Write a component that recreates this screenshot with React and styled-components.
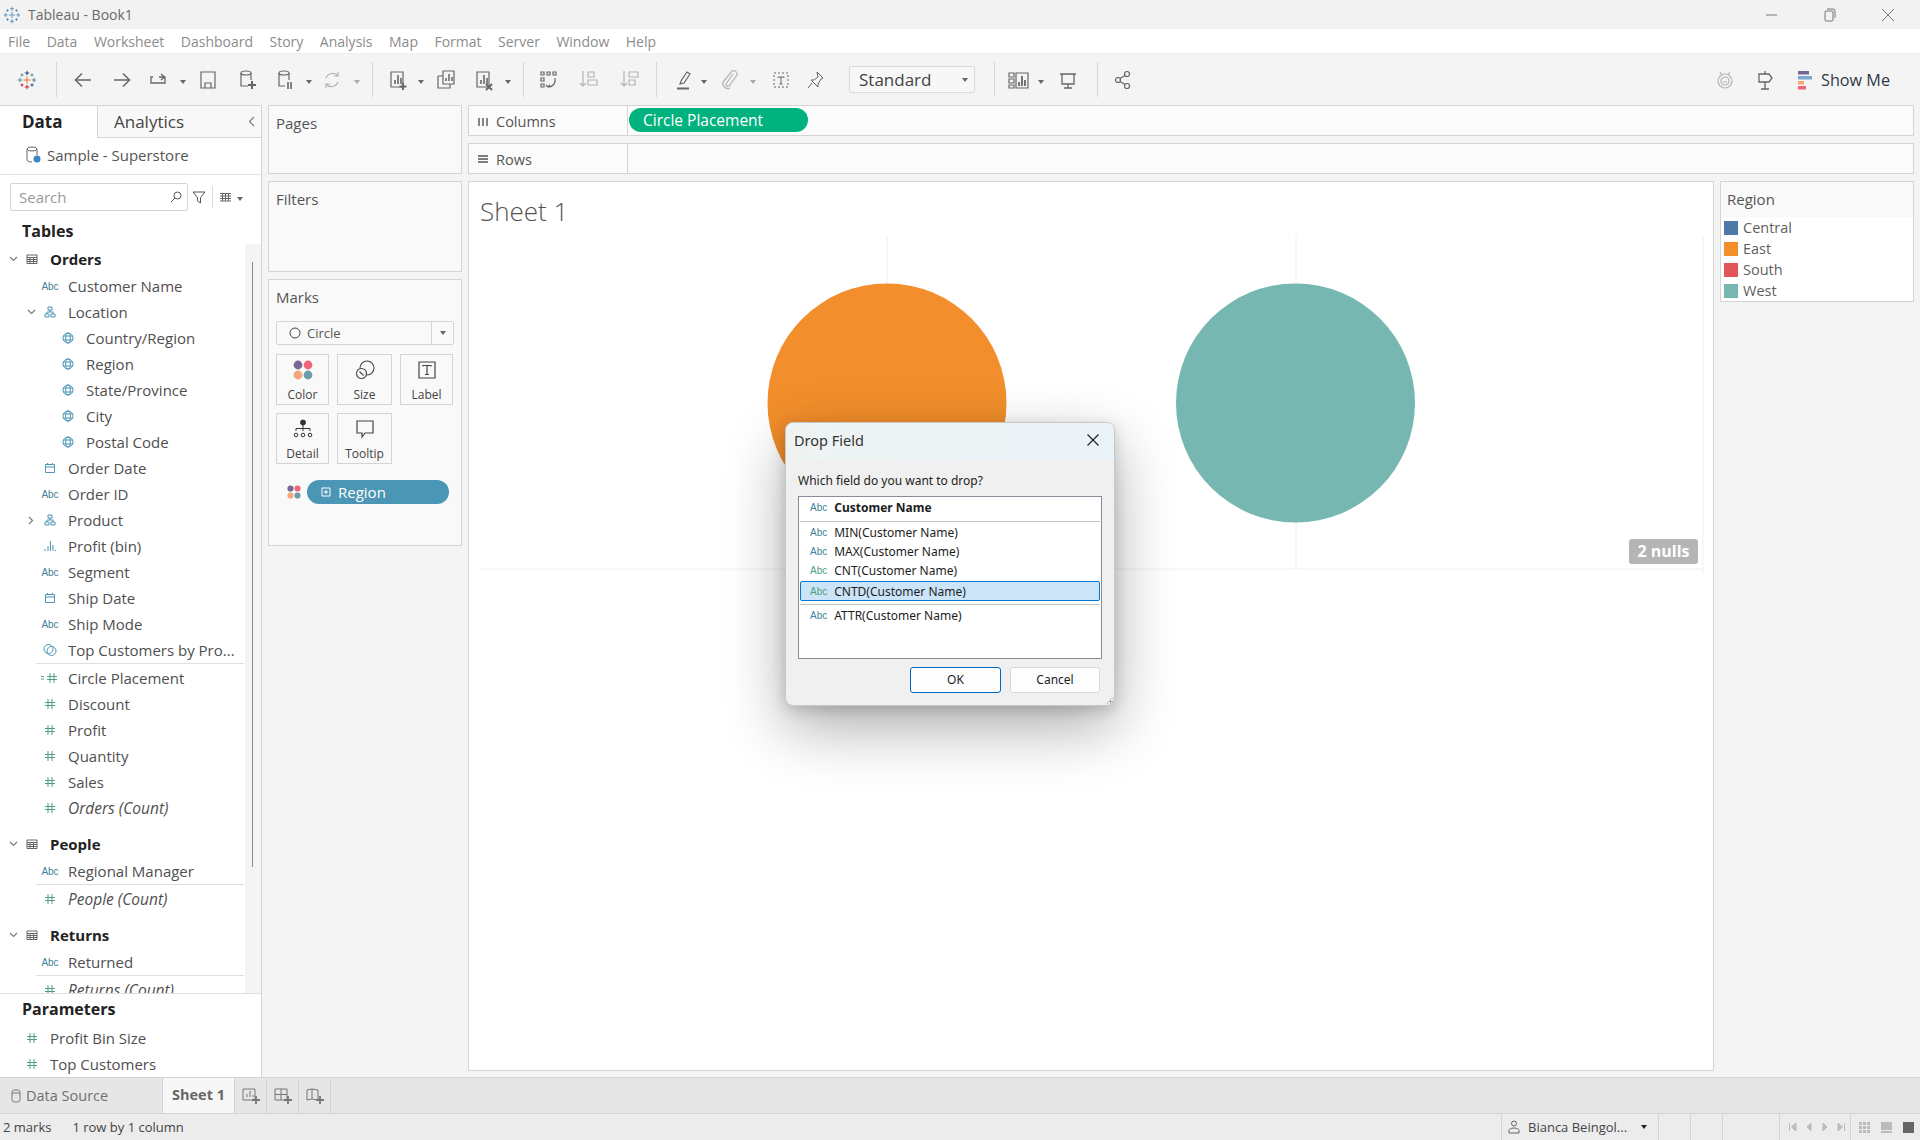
import React from 'react';
import styled, { createGlobalStyle } from 'styled-components';

const FONT = '"Open Sans", "Noto Sans", sans-serif';
const LINE = '#d4d4d4';

const Global = createGlobalStyle`
  html, body { margin: 0; padding: 0; background: #f4f4f4; }
  * { box-sizing: border-box; }
  body { font-family: ${FONT}; overflow: hidden; }
`;

const Page = styled.div`
  position: relative;
  width: 1920px;
  height: 1140px;
  display: flex;
  flex-direction: column;
  overflow: hidden;
  color: #4f4f4f;
`;

/* window chrome */
const TitleBar = styled.div`
  height: 29px;
  background: #f2f2f2;
  display: flex;
  align-items: center;
  padding-left: 3px;
  font-size: 14px;
  color: #6a6a6a;
`;
const TitleText = styled.span`margin-left: 7px;`;
const WinControls = styled.div`
  margin-left: auto;
  display: flex;
  align-items: center;
  gap: 44px;
  padding-right: 25px;
`;
const MenuBar = styled.div`
  height: 25px;
  background: #fff;
  display: flex;
  align-items: center;
  padding-left: 8px;
  gap: 16.5px;
  font-size: 14px;
  color: #8c8c8c;
  border-bottom: 1px solid #efefef;
`;
const Toolbar = styled.div`
  height: 51px;
  background: #f4f4f4;
  display: flex;
  align-items: center;
  padding-left: 15px;
  padding-right: 30px;
`;
const Tool = styled.div`
  width: 24px;
  height: 24px;
  margin-left: ${(p) => p.$gap || 0}px;
  flex: none;
  display: flex;
  align-items: center;
  justify-content: center;
  opacity: ${(p) => (p.$dim ? 0.45 : 1)};
  svg { display: block; }
`;
const Caret = styled.div`
  width: 8px;
  margin-left: ${(p) => p.$gap || 0}px;
  flex: none;
  height: 0;
  display: flex;
  justify-content: center;
  &::after {
    content: '';
    border: 3px solid transparent;
    border-top: 4px solid ${(p) => (p.$dim ? '#aaa' : '#666')};
    border-bottom: 0;
  }
`;
const ToolSep = styled.div`
  width: 1px;
  height: 35px;
  flex: none;
  background: #d6d6d6;
  margin-left: ${(p) => p.$gap || 0}px;
`;
const StandardSelect = styled.div`
  width: 126px;
  height: 27px;
  margin-left: ${(p) => p.$gap || 0}px;
  flex: none;
  display: flex;
  align-items: center;
  justify-content: space-between;
  padding: 0 6px 0 9px;
  border: 1px solid #dcdcdc;
  border-radius: 2px;
  background: #f7f7f7;
  font-size: 17px;
  color: #444;
`;
const ShowMe = styled.div`
  margin-left: auto;
  display: flex;
  align-items: center;
`;
const ShowMeText = styled.span`
  font-size: 16.2px;
  color: #2f3a48;
  margin-left: 4px;
`;

/* body */
const Body = styled.div`
  flex: 1;
  display: flex;
  min-height: 0;
  background: #f4f4f4;
`;
const Sidebar = styled.aside`
  width: 262px;
  flex: none;
  background: #fff;
  border-right: 1px solid ${LINE};
  border-top: 1px solid ${LINE};
  display: flex;
  flex-direction: column;
`;
const PaneTabs = styled.div`
  height: 32px;
  display: flex;
  flex: none;
  font-size: 17px;
`;
const DataTab = styled.div`
  width: 97px;
  padding-left: 22px;
  line-height: 31px;
  font-weight: 700;
  color: #222;
`;
const AnalyticsTab = styled.div`
  flex: 1;
  display: flex;
  align-items: center;
  justify-content: space-between;
  padding: 0 6px 0 16px;
  background: #f8f8f8;
  border-left: 1px solid ${LINE};
  border-bottom: 1px solid ${LINE};
  color: #444;
`;
const SourceRow = styled.div`
  height: 37px;
  flex: none;
  display: flex;
  align-items: center;
  gap: 6px;
  padding: 0 0 2px 26px;
  font-size: 15px;
  color: #555;
  border-bottom: 1px solid #e4e4e4;
`;
const SearchRow = styled.div`
  height: 42px;
  flex: none;
  display: flex;
  align-items: center;
  padding: 2px 0 0 10px;
`;
const SearchBox = styled.div`
  width: 178px;
  height: 28px;
  display: flex;
  align-items: center;
  justify-content: space-between;
  padding: 0 5px 0 8px;
  border: 1px solid ${LINE};
  border-radius: 2px;
  font-size: 15px;
  color: #9a9a9a;
`;
const SearchTools = styled.div`
  display: flex;
  align-items: center;
  margin-left: 4px;
`;
const VRule = styled.div`
  width: 1px;
  height: 22px;
  background: #ddd;
  margin: 0 6px;
`;
const SectionTitle = styled.div`
  height: 27px;
  flex: none;
  padding-left: 22px;
  display: flex;
  align-items: center;
  font-size: 16px;
  font-weight: 700;
  color: #222;
`;
const FieldList = styled.div`
  position: relative;
  flex: 1;
  min-height: 0;
  overflow: hidden;
`;
const ScrollTrack = styled.div`
  position: absolute;
  top: 0;
  right: 0;
  bottom: 0;
  width: 16px;
  background: #f4f4f4;
  &::after {
    content: '';
    position: absolute;
    left: 7px;
    top: 18px;
    height: 605px;
    width: 1px;
    background: #8a8a8a;
  }
`;
const Row = styled.div`
  height: 26px;
  display: flex;
  align-items: center;
  padding-left: ${(p) => p.$pad}px;
  font-size: 15px;
  color: #4f4f4f;
  white-space: nowrap;
  margin-top: ${(p) => p.$top || 0}px;
`;
const Chevron = styled.span`
  width: 14px;
  flex: none;
  display: flex;
  justify-content: center;
`;
const IconSlot = styled.span`
  width: 24px;
  height: 18px;
  flex: none;
  display: flex;
  align-items: center;
  justify-content: center;
  margin-right: 6px;
`;
const AbcMark = styled.span`
  font-size: 10px;
  font-weight: 400;
  letter-spacing: 0;
  color: ${(p) => p.$color || '#3f7f98'};
  font-family: "Liberation Sans", sans-serif;
`;
const TableName = styled.span`
  font-weight: 700;
  color: #222;
`;
const Measure = styled.span`
  font-style: ${(p) => (p.$italic ? 'italic' : 'normal')};
  font-size: ${(p) => (p.$italic ? '15.5px' : 'inherit')};
`;
const Rule = styled.div`
  height: 1px;
  margin-left: 36px;
  margin-right: 17px;
  background: #dfdfdf;
`;
const Params = styled.div`
  height: 84px;
  flex: none;
  border-top: 1px solid #dfdfdf;
  padding-top: 1px;
`;

const MidColumn = styled.div`
  width: 194px;
  flex: none;
  margin-left: 6px;
  display: flex;
  flex-direction: column;
  gap: 7px;
`;
const Card = styled.section`
  height: ${(p) => p.$h}px;
  flex: none;
  padding: 7px 7px 0;
  background: #f9f9f9;
  border: 1px solid ${LINE};
  font-size: 15px;
  color: #555;
`;
const MarkSelect = styled.div`
  height: 24px;
  margin-top: 14px;
  display: flex;
  align-items: center;
  border: 1px solid ${LINE};
  border-radius: 2px;
  font-size: 13px;
  padding-left: 12px;
  gap: 6px;
`;
const MarkCaretBox = styled.span`
  margin-left: auto;
  width: 22px;
  height: 100%;
  border-left: 1px solid ${LINE};
  display: flex;
  align-items: center;
  justify-content: center;
`;
const CaretGlyph = styled.span`
  display: block;
  flex: none;
  margin-left: ${(p) => p.$gap || 0}px;
  border: 3.5px solid transparent;
  border-top: 4px solid ${(p) => p.$color || '#666'};
  border-bottom: 0;
`;
const MarkGrid = styled.div`
  display: grid;
  grid-template-columns: 53px 55px 53px;
  grid-auto-rows: 51px;
  column-gap: 8px;
  row-gap: 8px;
  margin-top: 9px;
`;
const MarkButton = styled.div`
  border: 1px solid ${LINE};
  display: flex;
  flex-direction: column;
  align-items: center;
  padding-top: 5px;
  font-size: 12px;
  color: #444;
  gap: 6px;
`;
const PillRow = styled.div`
  display: flex;
  align-items: center;
  margin-top: 16px;
  padding-left: 11px;
  gap: 6px;
`;
const RegionPill = styled.div`
  width: 142px;
  height: 24px;
  border-radius: 12px;
  background: #4b96b4;
  color: #fff;
  display: flex;
  align-items: center;
  padding-left: 14px;
  gap: 7px;
  font-size: 15px;
`;

const Main = styled.main`
  flex: 1;
  min-width: 0;
  margin: 0 6px 6px 6px;
  display: flex;
  flex-direction: column;
  gap: 7px;
`;
const Shelf = styled.div`
  height: 31px;
  flex: none;
  display: flex;
  background: #fbfbfb;
  border: 1px solid ${LINE};
`;
const ShelfLabel = styled.div`
  width: 159px;
  flex: none;
  display: flex;
  align-items: center;
  gap: 7px;
  padding: 1px 0 0 8px;
  font-size: 14.5px;
  color: #555;
  border-right: 1px solid ${LINE};
`;
const GreenPill = styled.div`
  width: 179px;
  height: 24px;
  margin: 2px 0 0 1px;
  border-radius: 12px;
  background: #00b27d;
  color: #fff;
  font-size: 15.5px;
  line-height: 25px;
  padding-left: 14px;
`;
const ViewRow = styled.div`
  flex: 1;
  min-height: 0;
  display: flex;
  gap: 6px;
`;
const Sheet = styled.div`
  position: relative;
  width: 1246px;
  flex: none;
  background: #fff;
  border: 1px solid ${LINE};
`;
const SheetTitle = styled.div`
  font-size: 26px;
  font-weight: 300;
  line-height: 34px;
  color: #555;
  padding: 12px 0 0 11px;
`;
const Chart = styled.svg`
  display: block;
  margin-top: 8px;
`;
const NullBadge = styled.div`
  position: absolute;
  left: 1160px;
  top: 357px;
  width: 69px;
  height: 25px;
  border-radius: 3px;
  background: #b5b5b5;
  color: #fff;
  font-size: 16px;
  font-weight: 700;
  line-height: 25px;
  text-align: center;
`;
const Legend = styled.div`
  width: 194px;
  height: 121px;
  flex: none;
  background: #fff;
  border: 1px solid ${LINE};
`;
const LegendTitle = styled.div`
  height: 35px;
  background: #f9f9f9;
  font-size: 15px;
  line-height: 34px;
  padding-left: 6px;
  color: #555;
`;
const LegendList = styled.div`
  padding: 0 0 0 3px;
`;
const LegendRow = styled.div`
  height: 21px;
  display: flex;
  align-items: center;
  gap: 5px;
  font-size: 14.5px;
  color: #5f5f5f;
`;
const Swatch = styled.span`
  width: 14px;
  height: 14px;
  background: ${(p) => p.$color};
`;

/* bottom */
const TabBar = styled.div`
  height: 37px;
  flex: none;
  display: flex;
  background: #e6e6e6;
  border-top: 1px solid ${LINE};
  border-bottom: 1px solid ${LINE};
`;
const SourceTab = styled.div`
  width: 163px;
  display: flex;
  align-items: center;
  gap: 5px;
  padding-left: 11px;
  font-size: 14.5px;
  color: #707070;
  border-right: 1px solid ${LINE};
`;
const SheetTab = styled.div`
  width: 72px;
  background: #f7f7f7;
  font-weight: 700;
  font-size: 14.5px;
  color: #666;
  text-align: center;
  line-height: 34px;
  border-right: 1px solid ${LINE};
`;
const AddTab = styled.div`
  width: 32px;
  display: flex;
  align-items: center;
  justify-content: center;
  border-right: 1px solid ${LINE};
`;
const StatusBar = styled.div`
  height: 26px;
  flex: none;
  display: flex;
  align-items: center;
  background: #ececec;
  font-size: 13px;
  color: #444;
`;
const StatusText = styled.span`
  margin-left: ${(p) => p.$gap}px;
`;
const StatusCell = styled.div`
  width: ${(p) => p.$w}px;
  height: 100%;
  flex: none;
  display: flex;
  align-items: center;
  gap: ${(p) => p.$gap || 0}px;
  padding-left: ${(p) => p.$pad || 0}px;
  border-left: 1px solid ${LINE};
`;
const Spacer = styled.div`flex: 1;`;
const ViewMode = styled.span`
  width: 11px;
  height: 11px;
  flex: none;
  background: ${(p) => p.$color};
`;

/* dialog */
const Dialog = styled.div`
  position: absolute;
  left: 785px;
  top: 422px;
  width: 330px;
  height: 284px;
  border-radius: 8px;
  background: #f0f0f0;
  border: 1px solid #c8c8c8;
  box-shadow: 0 22px 60px rgba(0, 0, 0, 0.32), 0 4px 14px rgba(0, 0, 0, 0.16);
  overflow: hidden;
  font-family: "Noto Sans", sans-serif;
  font-size: 12px;
  color: #1d1d1d;
`;
const DialogHead = styled.div`
  height: 37px;
  display: flex;
  align-items: center;
  justify-content: space-between;
  padding: 0 14px 3px 8px;
  background: linear-gradient(90deg, #eef3f2, #eaf3f8);
  font-size: 14.5px;
  color: #333;
`;
const Prompt = styled.div`
  padding: 12px 0 0 12px;
  height: 36px;
  font-size: 12px;
`;
const ChoiceBox = styled.div`
  margin-left: 12px;
  width: 304px;
  height: 163px;
  background: #fff;
  border: 1px solid #8b8b99;
  padding: 1px;
`;
const Choice = styled.div`
  height: ${(p) => p.$h || 19}px;
  display: flex;
  align-items: center;
  gap: 7px;
  padding: 0 0 ${(p) => p.$lift || 0}px 9px;
  font-weight: ${(p) => (p.$bold ? 700 : 400)};
  background: ${(p) => (p.$selected ? '#cce4f7' : 'transparent')};
  border: 1px solid ${(p) => (p.$selected ? '#0078d4' : 'transparent')};
  border-radius: ${(p) => (p.$selected ? '2px' : '0')};
`;
const ChoiceRule = styled.div`
  height: 1px;
  background: #c4c4c4;
  margin: ${(p) => p.$margin};
`;
const DialogButtons = styled.div`
  display: flex;
  justify-content: flex-end;
  gap: 9px;
  padding: 8px 14px 0 0;
`;
const DialogButton = styled.div`
  width: ${(p) => p.$w}px;
  height: 26px;
  background: #fdfdfd;
  border: 1px solid ${(p) => (p.$primary ? '#0067c0' : '#d8d8d8')};
  border-radius: 3px;
  text-align: center;
  line-height: 24px;
`;
const Grip = styled.div`
  position: absolute;
  right: 1px;
  bottom: 1px;
  width: 7px;
  height: 7px;
  background: radial-gradient(circle, #a8a8a8 1px, transparent 1.2px) 0 0 / 3px 3px;
  clip-path: polygon(100% 0, 100% 100%, 0 100%);
`;

/* icons */
const Svg = ({ s = 24, w, h, children, color = '#666', sw = 1.2 }) => (
  <svg width={w || s} height={h || s} viewBox={`0 0 ${w || s} ${h || s}`} fill="none" stroke={color} strokeWidth={sw}>
    {children}
  </svg>
);

const TableauLogo = ({ size = 20, mono }) => {
  const c = mono
    ? ['#5f8fbd', '#5f8fbd', '#5f8fbd', '#5f8fbd', '#5f8fbd']
    : ['#e8762d', '#c72035', '#5b879b', '#1f457e', '#59879b'];
  const plus = (x, y, r, color) => (
    <path key={`${x}${y}`} d={`M${x - r} ${y}H${x + r}M${x} ${y - r}V${y + r}`} stroke={color} strokeWidth="1" />
  );
  return (
    <svg width={size} height={size} viewBox="0 0 20 20" fill="none">
      {plus(10, 10, 3.5, c[0])}
      {plus(10, 3, 2.2, c[3])}
      {plus(10, 17, 2.2, c[1])}
      {plus(3, 10, 2.2, c[2])}
      {plus(17, 10, 2.2, c[4])}
      {plus(5, 5, 1.5, c[2])}
      {plus(15, 5, 1.5, c[4])}
      {plus(5, 15, 1.5, c[1])}
      {plus(15, 15, 1.5, c[3])}
    </svg>
  );
};
const Hash = ({ color = '#4f9e85' }) => (
  <Svg s={12} color={color} sw={1}>
    <path d="M4 1v10M8 1v10M1 4.500h10M1 7.500h10" />
  </Svg>
);
const CalcHash = () => (
  <svg width="18" height="12" viewBox="0 0 18 12" fill="none" stroke="#4f9e85" strokeWidth="1">
    <path d="M9 1v10M13 1v10M6 4.500h10M6 7.500h10M0 4.500h3M0 7h3" />
  </svg>
);
const Globe = () => (
  <Svg s={12} color="#4b96b4" sw={1}>
    <circle cx="6" cy="6" r="5" />
    <ellipse cx="6" cy="6" rx="2.300" ry="5" />
    <path d="M1 4h10M1 8h10" />
  </Svg>
);
const Calendar = () => (
  <Svg s={12} color="#4b96b4" sw={1}>
    <path d="M1.500 2.500h9v8h-9zM1.500 5h9M3.500 1v2M8.500 1v2" />
  </Svg>
);
const Hierarchy = () => (
  <Svg s={12} color="#4b96b4" sw={1}>
    <path d="M4 1h4v3H4zM1 8h4v3H1zM7 8h4v3H7zM6 4v2M3 8V6h6v2" />
  </Svg>
);
const Bins = () => (
  <Svg s={14} color="#4b96b4" sw={1}>
    <path d="M2 12v-2M5 12V7M7.500 12V2M10 12V6M12.500 12v-1" />
  </Svg>
);
const SetIcon = () => (
  <Svg s={14} color="#4b96b4" sw={1}>
    <circle cx="5.500" cy="6" r="4.500" />
    <circle cx="8.500" cy="8" r="4.500" />
  </Svg>
);
const TableIcon = () => (
  <Svg s={12} color="#666" sw={1}>
    <path d="M1 2h10v8.500H1zM1 4.500h10M1 6.500h10M1 8.500h10M4 4.500v6M7.500 4.500v6" />
  </Svg>
);
const ChevDown = () => (
  <Svg w={9} h={6} color="#777" sw={1.1}>
    <path d="M1 1l3.500 3.500L8 1" />
  </Svg>
);
const ChevRight = () => (
  <Svg w={6} h={9} color="#777" sw={1.1}>
    <path d="M1 1l3.500 3.500L1 8" />
  </Svg>
);
const ColorDots = ({ size = 20 }) => (
  <svg width={size} height={size} viewBox="0 0 20 20">
    <circle cx="5" cy="5" r="4.400" fill="#7b6596" />
    <circle cx="15" cy="5" r="4.400" fill="#f0657a" />
    <circle cx="5" cy="15" r="4.400" fill="#f3a77a" />
    <circle cx="15" cy="15" r="4.400" fill="#6b9cab" />
  </svg>
);

const Abc = ({ color }) => <AbcMark $color={color}>Abc</AbcMark>;

const Field = ({ icon, pad = 38, chevron, children, italic, top }) => (
  <Row $pad={pad} $top={top}>
    {chevron && <Chevron>{chevron === 'down' ? <ChevDown /> : <ChevRight />}</Chevron>}
    <IconSlot>{icon}</IconSlot>
    <Measure $italic={italic}>{children}</Measure>
  </Row>
);
const TableRow = ({ children, top }) => (
  <Row $pad={6} $top={top}>
    <Chevron><ChevDown /></Chevron>
    <IconSlot><TableIcon /></IconSlot>
    <TableName>{children}</TableName>
  </Row>
);

const MarkIcon = {
  size: (
    <Svg s={20} color="#444" sw={1.1}>
      <circle cx="12" cy="8" r="7" />
      <circle cx="6.500" cy="13.500" r="5" fill="#f9f9f9" />
      <path d="M4.500 11.500l4 4" />
    </Svg>
  ),
  label: (
    <Svg s={20} color="#444" sw={1.200}>
      <path d="M2 2h16v16H2z" />
      <path d="M6 6.500V5.500h8v1M10 5.500v9M8 14.500h4" />
    </Svg>
  ),
  detail: (
    <svg width="20" height="20" viewBox="0 0 20 20" fill="none" stroke="#333" strokeWidth="1">
      <circle cx="10" cy="3.500" r="2.500" fill="#333" />
      <path d="M10 6v6M3 12V9.500h14V12" />
      <circle cx="3" cy="16" r="1.800" />
      <circle cx="10" cy="16" r="1.800" />
      <circle cx="17" cy="16" r="1.800" />
    </svg>
  ),
  tooltip: (
    <Svg s={20} color="#444" sw={1.200}>
      <path d="M2 2h16v12h-8l-3 4v-4H2z" />
    </Svg>
  ),
};

const BarSheet = ({ children }) => (
  <Svg s={24}>
    <path d="M5 4h12v15H5z" />
    <path d="M9 16v-4M12 16V7M15 16v-6" strokeWidth="1.600" />
    {children}
  </Svg>
);

const Legends = [
  ['Central', '#4e79a7'],
  ['East', '#f28e2b'],
  ['South', '#e15759'],
  ['West', '#76b7b2'],
];

export default function App() {
  return (
    <Page>
      <Global />
      <TitleBar>
        <TableauLogo size={18} mono />
        <TitleText>Tableau - Book1</TitleText>
        <WinControls>
          <Svg w={14} h={14} color="#777" sw={1}><path d="M1 7h11" /></Svg>
          <Svg w={14} h={14} color="#777" sw={1}>
            <rect x="2" y="3" width="8" height="10" rx="1" />
            <path d="M4 1h6a2 2 0 0 1 2 2v7" />
          </Svg>
          <Svg w={14} h={14} color="#777" sw={1}><path d="M1 1l12 12M13 1L1 13" /></Svg>
        </WinControls>
      </TitleBar>

      <MenuBar>
        {['File', 'Data', 'Worksheet', 'Dashboard', 'Story', 'Analysis', 'Map', 'Format', 'Server', 'Window', 'Help'].map((m) => (
          <span key={m}>{m}</span>
        ))}
      </MenuBar>

      <Toolbar>
        <Tool><TableauLogo size={20} /></Tool>
        <ToolSep $gap={17} />
        <Tool $gap={14}>
          <Svg><path d="M20 12H5M11 5.500L4.500 12l6.500 6.500" strokeWidth="1.500" /></Svg>
        </Tool>
        <Tool $gap={15}>
          <Svg><path d="M4 12h15M13 5.500l6.500 6.500-6.500 6.500" strokeWidth="1.500" /></Svg>
        </Tool>
        <Tool $gap={13}>
          <Svg><path d="M6 9H4v6h14V9h-6M14 6l3.500 3-3.500 3" strokeWidth="1.300" /></Svg>
        </Tool>
        <Caret $gap={8} />
        <Tool $gap={9}>
          <Svg><path d="M5 4h14v16H5zM9 20v-5h6v5" /></Svg>
        </Tool>
        <Tool $gap={15}>
          <Svg>
            <ellipse cx="11" cy="5" rx="5" ry="2" />
            <path d="M6 5v13h7M16 5v7" />
            <path d="M17 13v8M13 17h8" strokeWidth="2" />
          </Svg>
        </Tool>
        <Tool $gap={14}>
          <Svg>
            <ellipse cx="11" cy="5" rx="5" ry="2" />
            <path d="M6 5v13h6M16 5v7" />
            <path d="M15 14v7M18 14v7" strokeWidth="1.600" />
          </Svg>
        </Tool>
        <Caret $gap={8} />
        <Tool $gap={7} $dim>
          <Svg><path d="M6 10a7 7 0 0 1 12-2M18 14a7 7 0 0 1-12 2M18 4v4h-4M6 20v-4h4" /></Svg>
        </Tool>
        <Caret $gap={9} $dim />
        <ToolSep $gap={11} />
        <Tool $gap={13}><BarSheet><path d="M17 15v7M13.500 18.500h7" strokeWidth="2" /></BarSheet></Tool>
        <Caret $gap={7} />
        <Tool $gap={9}>
          <Svg>
            <path d="M9 3h11v13H9z" />
            <path d="M4 8h5M4 8v12h12v-4" />
            <path d="M12 13v-3M15 13V6M18 13V9" strokeWidth="1.500" />
          </Svg>
        </Tool>
        <Tool $gap={14}><BarSheet><path d="M14 16l6 6M20 16l-6 6" strokeWidth="2" /></BarSheet></Tool>
        <Caret $gap={8} />
        <ToolSep $gap={11} />
        <Tool $gap={12}>
          <Svg>
            <path d="M5 4h3v3H5zM11 4h3v3h-3zM17 4h3v3h-3zM5 10h3v3H5zM5 16h3v3H5z" />
            <path d="M19 10c1 5-2 9-7 9M10 17l2 2 2-2" />
          </Svg>
        </Tool>
        <Tool $gap={16} $dim>
          <Svg><path d="M7 3v15M4 15l3 3 3-3M12 4h6v5h-6zM12 12h9v5h-9z" /></Svg>
        </Tool>
        <Tool $gap={17} $dim>
          <Svg><path d="M7 3v15M4 15l3 3 3-3M12 4h9v5h-9zM12 12h6v5h-6z" /></Svg>
        </Tool>
        <ToolSep $gap={15} />
        <Tool $gap={14}>
          <Svg>
            <path d="M9 16l1-3 6-9 3 2-6 9zM9 16l3-1" />
            <path d="M6 20.500h12" strokeWidth="2" />
          </Svg>
        </Tool>
        <Caret $gap={5} />
        <Tool $gap={9} $dim>
          <Svg><path d="M16 6l-7 10a2 2 0 0 0 3 2l8-11a3.500 3.500 0 0 0-5-4L6 14a5 5 0 0 0 7 6" /></Svg>
        </Tool>
        <Caret $gap={8} $dim />
        <Tool $gap={12}>
          <Svg s={18} sw={1}>
            <path d="M2 2h14v14H2z" strokeDasharray="2 2" />
            <path d="M6 7V6h6v1M9 6v7M7.500 13h3" />
          </Svg>
        </Tool>
        <Tool $gap={11}>
          <Svg s={20} sw={1}><path d="M11 2l6 6-2 1-3 5 0 3-7-7 3 0 4-3zM6 13l-4 5" /></Svg>
        </Tool>
        <StandardSelect $gap={21}>Standard<CaretGlyph /></StandardSelect>
        <ToolSep $gap={19} />
        <Tool $gap={12}>
          <Svg>
            <path d="M2 5h5v4H2zM2 11h5v4H2zM2 17h5v3H2zM9 5h12v15H9z" />
            <path d="M12 18v-4M15 18V8M18 18v-6" strokeWidth="1.800" />
          </Svg>
        </Tool>
        <Caret $gap={6} />
        <Tool $gap={11}>
          <Svg s={20}><path d="M2 4h16M4 4v10h12V4M10 14v4M6 18h8" strokeWidth="1.300" /></Svg>
        </Tool>
        <ToolSep $gap={17} />
        <Tool $gap={13}>
          <Svg s={20}>
            <circle cx="5" cy="10" r="2.500" />
            <circle cx="14" cy="4" r="2.500" />
            <circle cx="14" cy="16" r="2.500" />
            <path d="M7 8.500l5-3M7 11.500l5 3" />
          </Svg>
        </Tool>
        <ShowMe>
          <Tool $dim>
            <Svg s={20}>
              <circle cx="10" cy="11" r="7" />
              <circle cx="10" cy="11" r="4" />
              <path d="M5 2l2 3M15 2l-2 3M8 12h4" />
            </Svg>
          </Tool>
          <Tool $gap={16}>
            <Svg s={20}><path d="M10 1v3M4 4h10l3 4-3 4H4zM10 12v7M6 19h8" strokeWidth="1.300" /></Svg>
          </Tool>
          <Tool $gap={16}>
            <svg width="24" height="24" viewBox="0 0 24 24">
              <rect x="5" y="3" width="11" height="3.500" fill="#7b6596" />
              <rect x="5" y="8" width="14" height="3.500" fill="#7fa8d1" />
              <rect x="5" y="13" width="6" height="3.500" fill="#f3a77a" />
              <rect x="5" y="18" width="8" height="3.500" fill="#f0657a" />
            </svg>
          </Tool>
          <ShowMeText>Show Me</ShowMeText>
        </ShowMe>
      </Toolbar>

      <Body>
        <Sidebar>
          <PaneTabs>
            <DataTab>Data</DataTab>
            <AnalyticsTab>
              Analytics
              <Svg w={7} h={11} color="#777" sw={1.1}><path d="M6 1L1.500 5.500 6 10" /></Svg>
            </AnalyticsTab>
          </PaneTabs>
          <SourceRow>
            <svg width="15" height="18" viewBox="0 0 15 18" fill="none" stroke="#666" strokeWidth="1">
              <ellipse cx="6" cy="3" rx="5" ry="2" />
              <path d="M1 3v11c0 1.500 3 2 5 2M11 3v6" />
              <circle cx="11" cy="13" r="3.500" fill="#3b87c4" stroke="none" />
            </svg>
            Sample - Superstore
          </SourceRow>
          <SearchRow>
            <SearchBox>
              Search
              <Svg s={12} color="#555" sw={1}>
                <circle cx="7.500" cy="4.500" r="3.500" />
                <path d="M5 7l-4 4" />
              </Svg>
            </SearchBox>
            <SearchTools>
              <Svg s={14} color="#555" sw={1}><path d="M1 2h12L8.500 7.500V13l-3-2V7.500z" /></Svg>
              <VRule />
              <Svg s={13} color="#666" sw={1}><path d="M1 2.500h11M1 5h11M1 7.500h11M1 10h11M3.500 2v8M6.500 2v8M9.500 2v8" /></Svg>
              <Caret $gap={4} />
            </SearchTools>
          </SearchRow>
          <SectionTitle>Tables</SectionTitle>
          <FieldList>
            <ScrollTrack />
            <TableRow top={2}>Orders</TableRow>
            <Field icon={<Abc />} top={1}>Customer Name</Field>
            <Field icon={<Hierarchy />} pad={24} chevron="down">Location</Field>
            <Field icon={<Globe />} pad={56}>Country/Region</Field>
            <Field icon={<Globe />} pad={56}>Region</Field>
            <Field icon={<Globe />} pad={56}>State/Province</Field>
            <Field icon={<Globe />} pad={56}>City</Field>
            <Field icon={<Globe />} pad={56}>Postal Code</Field>
            <Field icon={<Calendar />}>Order Date</Field>
            <Field icon={<Abc />}>Order ID</Field>
            <Field icon={<Hierarchy />} pad={24} chevron="right">Product</Field>
            <Field icon={<Bins />}>Profit (bin)</Field>
            <Field icon={<Abc />}>Segment</Field>
            <Field icon={<Calendar />}>Ship Date</Field>
            <Field icon={<Abc />}>Ship Mode</Field>
            <Field icon={<SetIcon />}>Top Customers by Pro...</Field>
            <Rule />
            <Field icon={<CalcHash />} top={1}>Circle Placement</Field>
            <Field icon={<Hash />}>Discount</Field>
            <Field icon={<Hash />}>Profit</Field>
            <Field icon={<Hash />}>Quantity</Field>
            <Field icon={<Hash />}>Sales</Field>
            <Field icon={<Hash />} italic>Orders (Count)</Field>
            <TableRow top={10}>People</TableRow>
            <Field icon={<Abc />} top={1}>Regional Manager</Field>
            <Rule />
            <Field icon={<Hash />} top={1} italic>People (Count)</Field>
            <TableRow top={10}>Returns</TableRow>
            <Field icon={<Abc />} top={1}>Returned</Field>
            <Rule />
            <Field icon={<Hash />} top={1} italic>Returns (Count)</Field>
          </FieldList>
          <Params>
            <SectionTitle>Parameters</SectionTitle>
            <Field icon={<Hash />} pad={20} top={3}>Profit Bin Size</Field>
            <Field icon={<Hash />} pad={20}>Top Customers</Field>
          </Params>
        </Sidebar>

        <MidColumn>
          <Card $h={69}>Pages</Card>
          <Card $h={91}>Filters</Card>
          <Card $h={267}>
            Marks
            <MarkSelect>
              <Svg s={12} color="#444" sw={1}><circle cx="6" cy="6" r="5" /></Svg>
              Circle
              <MarkCaretBox><CaretGlyph /></MarkCaretBox>
            </MarkSelect>
            <MarkGrid>
              <MarkButton><ColorDots />Color</MarkButton>
              <MarkButton>{MarkIcon.size}Size</MarkButton>
              <MarkButton>{MarkIcon.label}Label</MarkButton>
              <MarkButton>{MarkIcon.detail}Detail</MarkButton>
              <MarkButton>{MarkIcon.tooltip}Tooltip</MarkButton>
            </MarkGrid>
            <PillRow>
              <ColorDots size={14} />
              <RegionPill>
                <Svg s={10} color="#fff" sw={1}><path d="M1 1h8v8H1zM5 3v4M3 5h4" /></Svg>
                Region
              </RegionPill>
            </PillRow>
          </Card>
        </MidColumn>

        <Main>
          <Shelf>
            <ShelfLabel>
              <Svg s={12} color="#555" sw={1.4}><path d="M2 3v8M6 3v8M10 3v8" /></Svg>
              Columns
            </ShelfLabel>
            <GreenPill>Circle Placement</GreenPill>
          </Shelf>
          <Shelf>
            <ShelfLabel>
              <Svg s={12} color="#555" sw={1.4}><path d="M1 3h10M1 6h10M1 9h10" /></Svg>
              Rows
            </ShelfLabel>
          </Shelf>
          <ViewRow>
            <Sheet>
              <SheetTitle>Sheet 1</SheetTitle>
              <Chart width="1244" height="340" viewBox="0 0 1244 340">
                <path d="M10 333H1234M1234 0V337M418 0V333M827 0V333" stroke="#f0f0f0" fill="none" />
                <circle cx="418" cy="167" r="119.500" fill="#f28e2b" />
                <circle cx="826.500" cy="167" r="119.500" fill="#76b7b2" />
              </Chart>
              <NullBadge>2 nulls</NullBadge>
            </Sheet>
            <Legend>
              <LegendTitle>Region</LegendTitle>
              <LegendList>
                {Legends.map(([name, color]) => (
                  <LegendRow key={name}>
                    <Swatch $color={color} />
                    {name}
                  </LegendRow>
                ))}
              </LegendList>
            </Legend>
          </ViewRow>
        </Main>
      </Body>

      <TabBar>
        <SourceTab>
          <Svg w={10} h={14} color="#777" sw={1}>
            <rect x="1" y="1" width="8" height="12" rx="2.500" />
            <path d="M1 4h8" />
          </Svg>
          Data Source
        </SourceTab>
        <SheetTab>Sheet 1</SheetTab>
        <AddTab>
          <Svg s={18} color="#777" sw={1}>
            <path d="M1 2h12v11H1zM5 10V7M8 10V4M11 10V8" />
            <path d="M14 9v8M10 13h8" strokeWidth="1.800" />
          </Svg>
        </AddTab>
        <AddTab>
          <Svg s={18} color="#777" sw={1}>
            <path d="M1 2h12v11H1zM7 2v11M1 7.500h12" />
            <path d="M14 9v8M10 13h8" strokeWidth="1.800" />
          </Svg>
        </AddTab>
        <AddTab>
          <Svg s={18} color="#777" sw={1}>
            <path d="M1 3l5-1 6 1v10l-6-1-5 1zM6 2v10" />
            <path d="M14 9v8M10 13h8" strokeWidth="1.800" />
          </Svg>
        </AddTab>
      </TabBar>

      <StatusBar>
        <StatusText $gap={3}>2 marks</StatusText>
        <StatusText $gap={21}>1 row by 1 column</StatusText>
        <Spacer />
        <StatusCell $w={157} $pad={5} $gap={7}>
          <Svg s={14} color="#666" sw={1}>
            <circle cx="7" cy="3.500" r="2.500" />
            <path d="M2 13v-2.500c0-1.500 2-2.500 5-2.500s5 1 5 2.500V13z" />
          </Svg>
          <span>Bianca Beingol...</span>
          <CaretGlyph $color="#222" $gap={7} />
        </StatusCell>
        <StatusCell $w={32} />
        <StatusCell $w={32} />
        <StatusCell $w={57} />
        <StatusCell $w={71} $pad={8} $gap={6}>
          <Svg w={10} h={10} color="#bbb" sw={1}><path d="M1.500 1v8M8 1L3.500 5 8 9z" fill="#bbb" /></Svg>
          <Svg w={10} h={10} color="#bbb" sw={1}><path d="M7 1L3 5l4 4z" fill="#bbb" /></Svg>
          <Svg w={10} h={10} color="#bbb" sw={1}><path d="M3 1l4 4-4 4z" fill="#bbb" /></Svg>
          <Svg w={10} h={10} color="#bbb" sw={1}><path d="M8.500 1v8M2 1l4.500 4L2 9z" fill="#bbb" /></Svg>
        </StatusCell>
        <StatusCell $w={70} $pad={8} $gap={11}>
          <ViewMode $color="repeating-linear-gradient(90deg, transparent 0 3px, #ececec 3px 4px), repeating-linear-gradient(0deg, #bbb 0 3px, #ececec 3px 4px)" />
          <ViewMode $color="linear-gradient(#bbb 0 70%, #ececec 0 80%, #bbb 0)" />
          <ViewMode $color="#666" />
        </StatusCell>
      </StatusBar>

      <Dialog>
        <DialogHead>
          Drop Field
          <Svg s={14} color="#222" sw={1.2}><path d="M1.500 1.500l11 11M12.500 1.500l-11 11" /></Svg>
        </DialogHead>
        <Prompt>Which field do you want to drop?</Prompt>
        <ChoiceBox>
          <Choice $h={22} $bold $lift={3}><Abc />Customer Name</Choice>
          <ChoiceRule $margin="1px 0 1px" />
          <Choice $h={19} $lift={1}><Abc />MIN(Customer Name)</Choice>
          <Choice $h={19} $lift={1}><Abc />MAX(Customer Name)</Choice>
          <Choice $h={20} $lift={1}><Abc color="#4f9e85" />CNT(Customer Name)</Choice>
          <Choice $h={20} $selected><Abc color="#4f9e85" />CNTD(Customer Name)</Choice>
          <ChoiceRule $margin="3px 0 1px" />
          <Choice $h={19} $lift={1}><Abc />ATTR(Customer Name)</Choice>
        </ChoiceBox>
        <DialogButtons>
          <DialogButton $w={91} $primary>OK</DialogButton>
          <DialogButton $w={90}>Cancel</DialogButton>
        </DialogButtons>
        <Grip />
      </Dialog>
    </Page>
  );
}
